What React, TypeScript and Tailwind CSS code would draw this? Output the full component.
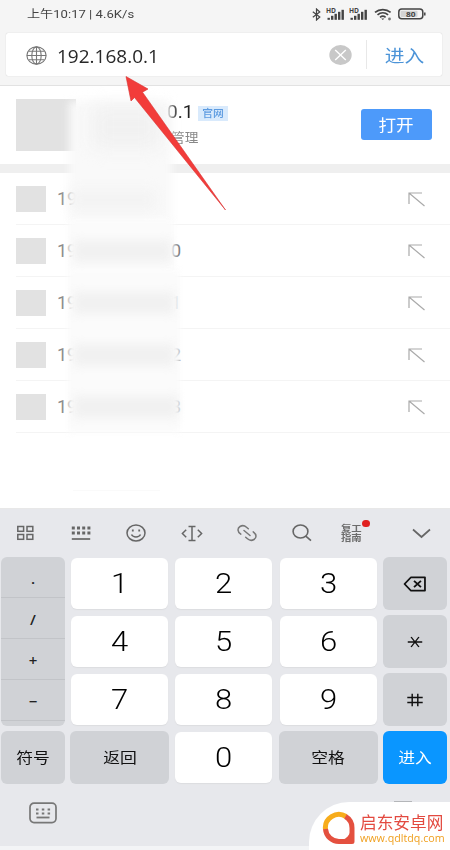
import { FC, ReactNode } from "react";
import clsx from "clsx";

const history = [
  { id: 0, last: "" },
  { id: 1, last: "0" },
  { id: 2, last: "1" },
  { id: 3, last: "2" },
  { id: 4, last: "3" },
];

const SignalIcon: FC = () => (
  <svg width="19" height="14" viewBox="0 0 19 14" fill="#444">
    <text x="0" y="5.7" fontSize="6.5" fontWeight="700" textLength="10" lengthAdjust="spacingAndGlyphs">
      HD
    </text>
    <rect x="1.5" y="10.8" width="2.4" height="2" />
    <rect x="5" y="8.8" width="2.4" height="4" />
    <rect x="8.5" y="6.8" width="2.4" height="6" />
    <rect x="12" y="4.8" width="2.4" height="8" />
    <rect x="15.5" y="2.8" width="2.4" height="10" />
  </svg>
);

const StatusBar: FC = () => (
  <div className="flex h-[33px] items-center justify-between pb-[5px] pl-[27px] pr-[24px] text-[#444]">
    <span className="inline-block origin-left scale-x-[1.14] whitespace-pre pt-px font-[Roboto,'Noto_Sans_CJK_SC',sans-serif] text-[11.5px]">
      上午10:17 | 4.6K/s
    </span>
    <div className="flex items-center">
      <svg width="9" height="13" viewBox="0 0 9 13" fill="none" stroke="#444" strokeWidth="1.2">
        <path d="M.8 3.8 7.8 9 4.5 12V1L7.8 4 .8 9.2" />
      </svg>
      <div className="ml-[5px] flex gap-1">
        <SignalIcon />
        <SignalIcon />
      </div>
      <svg className="ml-1.5" width="18" height="13" viewBox="0 0 18 13" fill="none" stroke="#444" strokeWidth="1.7">
        <path d="M1 4.3c4.4-3.7 11.2-3.7 15.6 0M3.5 6.9c3.1-2.6 7.5-2.6 10.6 0M6 9.3c1.7-1.4 3.9-1.4 5.6 0" />
        <path d="m7.2 10.4 1.6 1.5 1.6-1.5z" fill="#444" stroke="none" />
        <circle cx="15.5" cy="11" r="1.4" fill="#777" stroke="none" />
      </svg>
      <svg className="ml-[6px]" width="28" height="12" viewBox="0 0 28 12" fill="none" stroke="#444">
        <rect x=".8" y="1" width="24" height="9.8" rx="3" strokeWidth="1.5" />
        <rect x="2.5" y="2.7" width="17" height="6.4" rx="1" fill="#d4d4d4" stroke="none" />
        <path d="M26.8 4.5v3" strokeWidth="1.5" />
        <text x="8" y="8.7" fontSize="7.5" fontWeight="700" fill="#444" stroke="none" textLength="9.5" lengthAdjust="spacingAndGlyphs">
          80
        </text>
      </svg>
    </div>
  </div>
);

const SearchBar: FC = () => (
  <div className="ml-[6px] mr-[8px] flex h-[43px] items-center rounded-[2px] bg-white pl-5 shadow-[0_0_1px_#bbb]">
    <svg width="22" height="20" viewBox="0 0 22 20" fill="none" stroke="#777" strokeWidth="1.1">
      <ellipse cx="10.5" cy="10.5" rx="9.6" ry="8.6" />
      <ellipse cx="10.5" cy="10.5" rx="4.7" ry="8.6" />
      <path d="M10.5 1.9v17.2M.9 10.5h19.2M2.7 6.2h15.6M2.7 14.8h15.6" />
    </svg>
    <span className="ml-[9px] inline-block origin-left scale-x-[1.055] pt-[4px] text-[18px] text-[#282828]">
      192.168.0.1
    </span>
    <div className="ml-auto flex items-center">
      <svg width="23" height="21" viewBox="0 0 23 21">
        <ellipse cx="11.5" cy="11" rx="11.2" ry="10" fill="#c8c8c8" />
        <path d="m6.2 6 10.6 10M16.8 6 6.2 16" stroke="#fff" strokeWidth="1.4" />
      </svg>
      <div className="ml-[14px] h-[29px] w-px bg-[#e8e8e8]" />
      <span className="mr-[18px] ml-[17px] inline-block w-[40px] pt-[2px] text-center text-[17.5px] text-[#4c94d8]">
        <span className="inline-block scale-x-[1.13]">进入</span>
      </span>
    </div>
  </div>
);

const SiteCard: FC = () => (
  <div className="flex h-[78px] pt-[13px] pl-4">
    <div className="h-[52px] w-[60px] bg-[#e2e2e2]" />
    <div className="ml-[91px] w-[75px] whitespace-nowrap">
      <div className="flex h-[28px] items-center">
        <span className="inline-block w-[31px] font-[Roboto] text-[18.5px] text-[#222]">
          <span className="inline-block origin-left scale-x-[1.03]">0.1</span>
        </span>
        <span className="mt-px flex h-[15px] w-[30px] shrink-0 items-center justify-center bg-[#d9eafc] text-[10px] font-medium text-[#5d9be0]">
          <span className="inline-block scale-x-[1.08]">官网</span>
        </span>
      </div>
      <div className="-mt-px ml-[4px] h-[22px] text-[13px] leading-[22px] text-[#888]">
        <span className="inline-block origin-left scale-x-[1.05]">管理</span>
      </div>
    </div>
    <button className="mt-[10px] mr-[18px] ml-auto h-[31px] w-[71px] rounded-[3px] bg-[#4d9afa] pt-px text-[16px] text-white">
      <span className="inline-block scale-x-[1.1]">打开</span>
    </button>
  </div>
);

const HistoryRow: FC<{ last: string }> = ({ last }) => (
  <div className="ml-4 flex h-[52px] items-center border-b border-[#f4f4f4] pr-[24px]">
    <div className="h-[26px] w-[30px] bg-[#e2e2e2]" />
    <span className="ml-[11px] w-[114px] font-[Roboto] text-[18px] text-[#8a8a8a]">19</span>
    <span className="font-[Roboto] text-[18px] text-[#777]">{last}</span>
    <svg className="mt-[2px] ml-auto" width="18" height="15" viewBox="0 0 18 15" fill="none" stroke="#aaa" strokeWidth="1.2">
      <path d="M1 12V1h13M1 1l15.5 13" />
    </svg>
  </div>
);

// Soft patches that hide the address text of the suggestions
const Haze: FC = () => (
  <div className="pointer-events-none absolute inset-0">
    <div className="absolute top-[101px] left-[69px] h-[120px] w-[103px] bg-[#f9f9f9] blur-[4px]" />
    <div className="absolute top-[106px] left-[92px] h-[42px] w-[68px] bg-[#f1f1f1] blur-[9px]" />
    <div className="absolute top-[190px] left-[71px] h-[20px] w-[84px] bg-[#f3f3f3] blur-[6px]" />
    <div className="absolute top-[220px] left-[68px] h-[50px] w-[106px] bg-[#fbfbfb] blur-[3px]" />
    <div className="absolute top-[270px] left-[68px] h-[163px] w-[112px] bg-[#fbfbfb] blur-[3px]" />
    <div className="absolute top-[240px] left-[74px] h-[22px] w-[97px] bg-[#f1f1f1] blur-[5px]" />
    <div className="absolute top-[292px] left-[74px] h-[22px] w-[100px] bg-[#f1f1f1] blur-[5px]" />
    <div className="absolute top-[344px] left-[74px] h-[22px] w-[100px] bg-[#f1f1f1] blur-[5px]" />
    <div className="absolute top-[396px] left-[74px] h-[22px] w-[104px] bg-[#f1f1f1] blur-[5px]" />
    <div className="absolute top-[490px] left-[73px] h-px w-[87px] bg-[#fafafa]" />
  </div>
);

const Toolbar: FC = () => (
  <div className="flex h-[48px] items-center pl-[16px]">
    <svg width="19" height="16" viewBox="0 0 19 16" fill="none" stroke="#666" strokeWidth="1.5">
      <rect x="1.8" y="1.5" width="5.8" height="4.8" />
      <rect x="11" y="1.5" width="5.8" height="4.8" />
      <rect x="1.8" y="9.5" width="5.8" height="4.8" />
      <rect x="11" y="9.5" width="5.8" height="4.8" />
    </svg>
    <svg className="ml-[36px]" width="20" height="15" viewBox="0 0 20 15" stroke="#666">
      <path d="M.8 2h19M.8 7h19" strokeWidth="2.8" strokeDasharray="3 2.2" />
      <path d="M.8 13h18.4" strokeWidth="1.7" />
    </svg>
    <svg className="ml-[35px]" width="20" height="18" viewBox="0 0 20 18" fill="none" stroke="#666" strokeWidth="1.5">
      <ellipse cx="10" cy="9" rx="9" ry="8" />
      <path d="M5.5 10.5c1.500 3.200 7.500 3.200 9 0" />
      <path d="M6.800 5.500v2M13.200 5.500v2" strokeWidth="1.800" />
    </svg>
    <svg className="ml-[35px]" width="22" height="17" viewBox="0 0 22 17" fill="none" stroke="#666" strokeWidth="1.500">
      <path d="M5.200 4.700 1.400 8.500l3.800 3.800M16.800 4.700l3.800 3.800-3.800 3.800M11 1.500v14M7.500 1.500h7M7.500 15.500h7" />
    </svg>
    <svg className="ml-[34px]" width="20" height="18" viewBox="0 0 20 18" fill="none" stroke="#777" strokeWidth="1.500" strokeLinecap="round">
      <path d="M3.800 10.200C.3 7.800.2 4.200 3 2.500c2.200-1.300 4.700-.9 6.500.7l1.800 1.600M16.200 7.800c3.500 2.400 3.600 6 .8 7.700-2.200 1.300-4.700.9-6.500-.7l-1.800-1.600M7 6.500l6 5" />
    </svg>
    <svg className="ml-[35px]" width="20" height="18" viewBox="0 0 20 18" fill="none" stroke="#666" strokeWidth="1.600">
      <ellipse cx="8.500" cy="7.500" rx="7.400" ry="6.500" />
      <path d="m13.800 12.200 5.200 4.500" />
    </svg>
    <div className="relative ml-[29px] w-[21px] font-['Noto_Sans_CJK_SC',sans-serif] text-[9px] leading-[9px] font-bold text-[#6c6c6c]">
      <div className="w-[18px] origin-left scale-x-[1.150] whitespace-nowrap">复工</div>
      <div className="w-[18px] origin-left scale-x-[1.150] whitespace-nowrap">指南</div>
      <span className="absolute -top-[4px] left-[21px] h-[7px] w-[8px] rounded-full bg-[#e02020]" />
    </div>
    <svg className="ml-[50px]" width="19" height="11" viewBox="0 0 19 11" fill="none" stroke="#666" strokeWidth="1.700">
      <path d="m1 1.500 8.500 7.500L18 1.500" />
    </svg>
  </div>
);

interface KeyProps {
  children: ReactNode;
  variant?: "light" | "dark" | "primary";
}

const Key: FC<KeyProps> = ({ children, variant = "light" }) => (
  <button
    className={clsx(
      "flex items-center justify-center rounded-[6px]",
      variant === "light" && "mx-px mt-px mb-px bg-white pt-[2px] font-[Roboto] text-[27px] font-light text-black shadow-[0_1px_1px_#dcdde0]",
      variant === "dark" && "bg-[#d0d2d6] text-[15px] text-[#111]",
      variant === "primary" && "bg-[#0a96ff] text-[15px] text-white"
    )}
  >
    <span className={clsx("inline-block", variant === "light" ? "scale-x-[1.150]" : "scale-x-[1.120]")}>
      {children}
    </span>
  </button>
);

const Keypad: FC = () => (
  <div className="grid h-[227px] grid-cols-[64px_99px_99px_99px_64px] grid-rows-[53px_53px_53px_53px] gap-x-[5.2px] gap-y-[5px] pl-px">
    <div className="row-span-3 flex flex-col overflow-hidden rounded-[6px] bg-[#d0d2d6] text-[15px] font-semibold text-[#222]">
      {[".", "/", "+", "−"].map((symbol) => (
        <div key={symbol} className="flex h-[41px] items-center justify-center border-b border-[#c2c4c8] pt-[3px]">
          {symbol}
        </div>
      ))}
    </div>
    <Key>1</Key>
    <Key>2</Key>
    <Key>3</Key>
    <Key variant="dark">
      <svg width="22" height="16" viewBox="0 0 24 18" fill="none" stroke="#111" strokeWidth="1.800">
        <path d="M8 1.500h14v15H8L1.500 9z" strokeLinejoin="round" />
        <path d="m11 5.500 7 7M18 5.500l-7 7" />
      </svg>
    </Key>
    <Key>4</Key>
    <Key>5</Key>
    <Key>6</Key>
    <Key variant="dark">
      <svg width="14" height="14" viewBox="0 0 14 14" stroke="#111" strokeWidth="1.300">
        <path d="M.5 7h13M3.500 2l7 10M10.500 2l-7 10" />
      </svg>
    </Key>
    <Key>7</Key>
    <Key>8</Key>
    <Key>9</Key>
    <Key variant="dark">
      <svg width="14" height="14" viewBox="0 0 14 14" stroke="#111" strokeWidth="1.300">
        <path d="M0 4.500h14M0 9.500h14M4.500.8v12.400M9.500.8v12.400" />
      </svg>
    </Key>
    <Key variant="dark">符号</Key>
    <Key variant="dark">返回</Key>
    <Key>0</Key>
    <Key variant="dark">空格</Key>
    <Key variant="primary">进入</Key>
  </div>
);

const Keyboard: FC = () => (
  <div className="h-[341px] bg-[#e7e8ec]">
    <Toolbar />
    <Keypad />
    <div className="flex h-[62px] pt-[18px] pl-[29px]">
      <svg width="28" height="22" viewBox="0 0 28 22" fill="none" stroke="#777">
        <rect x="1" y="1.200" width="26" height="19.400" rx="4" strokeWidth="1.700" />
        <path d="M7 7.500h14.500M7 11.500h14.500" strokeWidth="2.200" strokeDasharray="2.500 3.300" />
        <path d="M7.500 15.500h13" strokeWidth="1.800" />
      </svg>
      <div className="ml-[337px] -mt-px h-[2px] w-[18px] bg-[#b4b6b9]" />
    </div>
    <div className="h-1 bg-[#f3f4f6]" />
  </div>
);

const Watermark: FC = () => (
  <div className="absolute right-0 bottom-0 flex h-[48px] w-[141px] rounded-tl-[40px] bg-white">
    <svg className="mt-[9px] ml-[13px]" width="34" height="35" viewBox="0 0 34 35" fill="none" strokeWidth="5">
      <path d="M3.500 18.500A13.500 13.300 0 0 1 24 5.500" stroke="#f7ac1b" />
      <path d="M23.500 5.500A13.300 13.300 0 0 1 30 17V30.500H17A13.500 13.500 0 0 1 3.500 18" stroke="#e4503f" strokeLinejoin="round" />
      <path d="M28.500 20.500c-1 3.500-4 7-8 8.500h8z" fill="#e4503f" />
    </svg>
    <div className="mt-[11px] ml-[4px] whitespace-nowrap">
      <div className="origin-left scale-x-[1.010] text-[16.500px] leading-[20px] text-[#e34a40]">启东安卓网</div>
      <div className="origin-left scale-x-[1.070] text-[10px] leading-[10px] text-[#f0a020]">www.qdltdq.com</div>
    </div>
  </div>
);

const App: FC = () => {
  return (
    <div className="relative h-[850px] w-[450px] overflow-hidden bg-white font-['Open_Sans','Noto_Sans_CJK_SC',sans-serif]">
      <header className="h-[86px] border-b border-[#e2e2e2] bg-[#f5f5f5]">
        <StatusBar />
        <SearchBar />
      </header>
      <main className="h-[423px] border-b border-[#e8e8e8]">
        <SiteCard />
        <div className="h-[9px] bg-[#efefef]" />
        {history.map((item) => (
          <HistoryRow key={item.id} last={item.last} />
        ))}
      </main>
      <Keyboard />
      <Haze />
      <svg className="pointer-events-none absolute top-[74px] left-[124px]" width="104" height="138" viewBox="0 0 104 138">
        <path d="M2 2.500 24 15l-5.500 3.200L101.500 136 10.500 23.500 7 27z" fill="#f23c3a" stroke="#d83030" strokeWidth=".6" />
      </svg>
      <Watermark />
    </div>
  );
};

export default App;
